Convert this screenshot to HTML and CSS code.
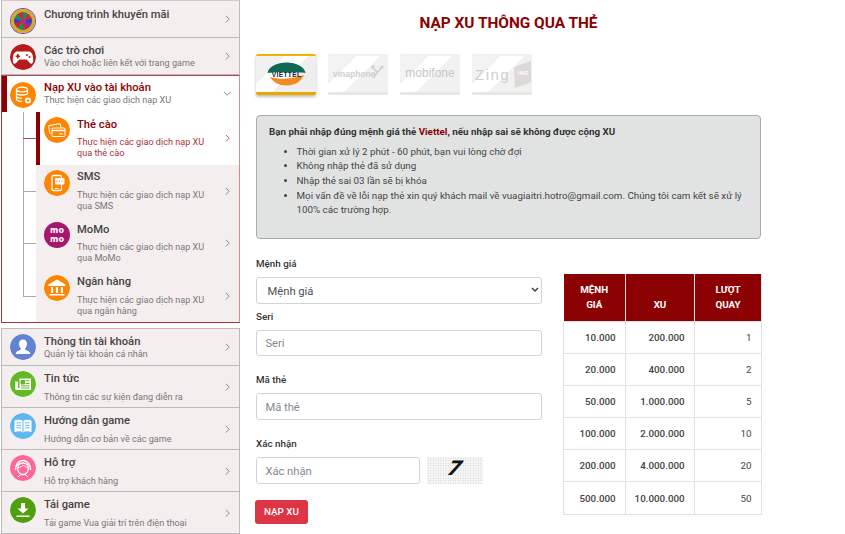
FILE: index.html
```html
<!DOCTYPE html>
<html lang="vi">
<head>
<meta charset="utf-8">
<title>Nạp XU thông qua thẻ</title>
<link rel="stylesheet" href="styles.css">
</head>
<body>
<div class="page">
  <aside class="sidebar">
    <div class="block">
      <a class="item first">
        <span class="ico wheel"></span>
        <span class="txt"><b class="t">Chương trình khuyến mãi</b></span>
        <svg class="chev" viewBox="0 0 6 10"><path d="M1 1l4 4-4 4"/></svg>
      </a>
      <a class="item">
        <svg class="ico" viewBox="0 0 26 26"><circle cx="13" cy="13" r="13" fill="#b71c1c"/><path d="M7.500 7.500h11c2.700 0 4 2.300 4.500 5.500.5 3.200.3 6.300-1.500 6.700-1.800.3-3.100-3-4.800-4.200H9.300c-1.700 1.200-3 4.500-4.800 4.200-1.800-.4-2-3.500-1.500-6.700.5-3.200 1.800-5.500 4.500-5.500z" fill="#fff"/><path d="M7 10h1.600v1.500H10V13H8.600v1.500H7V13H5.600v-1.500H7z" fill="#b71c1c"/><circle cx="17" cy="11" r="1" fill="#b71c1c"/><circle cx="19.500" cy="13" r="1" fill="#b71c1c"/></svg>
        <span class="txt"><b class="t">Các trò chơi</b><small class="s">Vào chơi hoặc liên kết với trang game</small></span>
        <svg class="chev" viewBox="0 0 6 10"><path d="M1 1l4 4-4 4"/></svg>
      </a>
      <div class="group">
        <a class="item head">
          <svg class="ico" viewBox="0 0 26 26"><circle cx="13" cy="13" r="13" fill="#ff8400"/><g fill="none" stroke="#fff" stroke-width="1.300"><ellipse cx="12" cy="7.500" rx="5.500" ry="2.300"/><path d="M6.500 7.500v9.500c0 1.300 2.500 2.300 5.500 2.300M17.500 7.500v5M6.500 10.700c0 1.300 2.500 2.300 5.500 2.300s5.500-1 5.500-2.300M6.500 13.900c0 1.300 2.500 2.300 5.500 2.300"/></g><circle cx="18" cy="18.500" r="3" fill="#fff"/><path d="M18 17v3M16.500 18.500h3" stroke="#ff8400"/></svg>
          <span class="txt"><b class="t">Nạp XU vào tài khoản</b><small class="s">Thực hiện các giao dịch nạp XU</small></span>
          <svg class="chev down" viewBox="0 0 10 6"><path d="M1 1l4 4 4-4"/></svg>
        </a>
        <div class="subs">
          <a class="sub on">
            <svg class="ico" viewBox="0 0 26 26"><circle cx="13" cy="13" r="13" fill="#ff8400"/><g fill="none" stroke="#fff" stroke-width="1"><rect x="5" y="7.500" width="12" height="8" rx="1" transform="rotate(-10 11 11)"/><rect x="8" y="11" width="13" height="8.500" rx="1" fill="#ff8400"/></g><path d="M8 13.500h13" stroke="#fff" stroke-width="1.500"/><path d="M15 17h4" stroke="#fff"/></svg>
            <span class="txt"><b class="t">Thẻ cào</b><small class="s">Thực hiện các giao dịch nạp XU<br>qua thẻ cào</small></span>
            <svg class="chev" viewBox="0 0 6 10"><path d="M1 1l4 4-4 4"/></svg>
          </a>
          <a class="sub">
            <svg class="ico" viewBox="0 0 26 26"><circle cx="13" cy="13" r="13" fill="#ff8400"/><rect x="8" y="5.500" width="9.500" height="15" rx="1.500" fill="none" stroke="#fff" stroke-width="1.300"/><rect x="11" y="8" width="9.500" height="6.500" rx="1" fill="#fff"/><path d="M12.500 11.200h1M15 11.200h1M17.500 11.200h1" stroke="#ff8400" stroke-width="1.200"/><path d="M11 18.500h3.500" stroke="#fff"/></svg>
            <span class="txt"><b class="t">SMS</b><small class="s">Thực hiện các giao dịch nạp XU<br>qua SMS</small></span>
            <svg class="chev" viewBox="0 0 6 10"><path d="M1 1l4 4-4 4"/></svg>
          </a>
          <a class="sub">
            <span class="ico momo"><span>mo</span><span>mo</span></span>
            <span class="txt"><b class="t">MoMo</b><small class="s">Thực hiện các giao dịch nạp XU<br>qua MoMo</small></span>
            <svg class="chev" viewBox="0 0 6 10"><path d="M1 1l4 4-4 4"/></svg>
          </a>
          <a class="sub">
            <svg class="ico" viewBox="0 0 26 26"><circle cx="13" cy="13" r="13" fill="#ff8400"/><path d="M13 4.500l8.500 5v1.500h-17V9.500z" fill="#fff"/><path d="M7 12h2.200v6H7zM11.900 12h2.200v6h-2.200zM16.800 12H19v6h-2.200zM5.500 19h15v1.500h-15z" fill="#fff"/></svg>
            <span class="txt"><b class="t">Ngân hàng</b><small class="s">Thực hiện các giao dịch nạp XU<br>qua ngân hàng</small></span>
            <svg class="chev" viewBox="0 0 6 10"><path d="M1 1l4 4-4 4"/></svg>
          </a>
        </div>
      </div>
    </div>
    <div class="block lower">
      <a class="item short">
        <svg class="ico" viewBox="0 0 26 26"><circle cx="13" cy="13" r="13" fill="#6482d2"/><path d="M13 5.500c2.600 0 4 2 4 4.500 0 1.800-.8 3.300-1.800 4.300v1.200c1.500 1.200 5 1.500 5 4.500H5.800c0-3 3.500-3.300 5-4.500v-1.200C9.800 13.300 9 11.800 9 10c0-2.500 1.400-4.500 4-4.500z" fill="#fff"/></svg>
        <span class="txt"><b class="t">Thông tin tài khoản</b><small class="s">Quản lý tài khoản cá nhân</small></span>
        <svg class="chev" viewBox="0 0 6 10"><path d="M1 1l4 4-4 4"/></svg>
      </a>
      <a class="item tall">
        <svg class="ico" viewBox="0 0 26 26"><circle cx="13" cy="13" r="13" fill="#5fba24"/><path d="M9.500 7.500h11.500v11.500H6.500a1.500 1.500 0 0 1-1.500-1.500v-7h3V17h1.500z" fill="#fff"/><path d="M11 9.500h3.500v3.500H11zM15.500 9.800h4M15.500 12.500h4M11 14.800h8.500M11 17h8.500" stroke="#5fba24" fill="#5fba24"/></svg>
        <span class="txt"><b class="t">Tin tức</b><small class="s">Thông tin các sự kiện đang diễn ra</small></span>
        <svg class="chev" viewBox="0 0 6 10"><path d="M1 1l4 4-4 4"/></svg>
      </a>
      <a class="item tall">
        <svg class="ico" viewBox="0 0 26 26"><circle cx="13" cy="13" r="13" fill="#5cb8f2"/><path d="M4.500 7.500c3-1 6.500-1 8.500.5 2-1.500 5.500-1.500 8.500-.5v11.500c-3-1-6.500-1-8.500.5-2-1.500-5.500-1.500-8.500-.5z" fill="#fff"/><path d="M13 8v11M6.500 10c1.500-.4 3-.4 4.500 0M6.500 12.500c1.500-.4 3-.4 4.500 0M6.500 15c1.500-.4 3-.4 4.500 0M15 10c1.500-.4 3-.4 4.500 0M15 12.500c1.500-.4 3-.4 4.500 0M15 15c1.500-.4 3-.4 4.500 0" stroke="#5cb8f2" fill="none"/></svg>
        <span class="txt"><b class="t">Hướng dẫn game</b><small class="s">Hướng dẫn cơ bản về các game</small></span>
        <svg class="chev" viewBox="0 0 6 10"><path d="M1 1l4 4-4 4"/></svg>
      </a>
      <a class="item tall">
        <svg class="ico" viewBox="0 0 26 26"><circle cx="13" cy="13" r="13" fill="#ff6797"/><path d="M5.500 15c0-5.500 3-9.500 7.500-9.500s7.500 4 7.500 9.500" fill="none" stroke="#fff" stroke-width="1.500"/><path d="M13 8c3.500 0 5.300 2.500 5.300 5.500 0 3.300-2.300 6-5.300 6s-5.300-2.700-5.300-6C7.700 10.500 9.500 8 13 8z" fill="#ff6797" stroke="#fff" stroke-width="1.300"/><path d="M8 12.500c2.500 0 4.500-1 5.500-2.500 1 1.500 2.500 2.500 4.500 2.500" fill="none" stroke="#fff"/><path d="M8 22c1.500-1.800 3-2.500 5-2.500s3.500.7 5 2.500" stroke="#fff" fill="none"/></svg>
        <span class="txt"><b class="t">Hỗ trợ</b><small class="s">Hỗ trợ khách hàng</small></span>
        <svg class="chev" viewBox="0 0 6 10"><path d="M1 1l4 4-4 4"/></svg>
      </a>
      <a class="item tall">
        <svg class="ico" viewBox="0 0 26 26"><circle cx="13" cy="13" r="13" fill="#4f9f0f"/><path d="M11 6h4v5.500h3.500L13 16.500 7.500 11.500H11z" fill="#fff"/><path d="M6.500 18.500h13v1.500h-13z" fill="#fff"/></svg>
        <span class="txt"><b class="t">Tải game</b><small class="s">Tải game Vua giải trí trên điện thoại</small></span>
        <svg class="chev" viewBox="0 0 6 10"><path d="M1 1l4 4-4 4"/></svg>
      </a>
    </div>
  </aside>

  <main class="main">
    <h1 class="title">NẠP XU THÔNG QUA THẺ</h1>

    <div class="cards">
      <div class="card active">
        <svg viewBox="0 0 60 36"><path d="M11.500 17c1-6 9-10.500 19-10.500S48.500 11 49.500 17c-6-1.500-32-1.500-38 0z" fill="#0c6b52"/><path d="M14 21c9 3 24 2 34-2-3 7-10 10.500-17.500 10.500C23.500 29.500 17 26 14 21z" fill="#f08a1c"/><text x="30.500" y="20.500" class="viettel">VIETTEL</text></svg>
      </div>
      <div class="card">
        <svg viewBox="0 0 60 36"><text x="5" y="21" class="logo vina">vinaphone</text><path d="M45 22l9-11M45 12l5 5" stroke="#c4c4c4" stroke-width="1.500" fill="none"/><circle cx="45" cy="11" r="1.800" fill="#c4c4c4"/><circle cx="54" cy="11" r="1.500" fill="#c4c4c4"/></svg>
      </div>
      <div class="card">
        <svg viewBox="0 0 60 36"><text x="30" y="21" class="logo mobi">mobifone</text></svg>
      </div>
      <div class="card">
        <svg viewBox="0 0 60 36"><text x="3" y="24" class="logo zing">Zing</text><path d="M42 11l17-6v21l-16 6z" fill="#d4d0d0"/><text x="51" y="19" class="logo ung">UNG</text></svg>
      </div>
    </div>

    <section class="notice">
      <p class="lead">Bạn phải nhập đúng mệnh giá thẻ <span class="red">Viettel</span>, nếu nhập sai sẽ không được cộng XU</p>
      <ul class="rules">
        <li>Thời gian xử lý 2 phút - 60 phút, bạn vui lòng chờ đợi</li>
        <li>Không nhập thẻ đã sử dụng</li>
        <li>Nhập thẻ sai 03 lần sẽ bị khóa</li>
        <li>Mọi vấn đề về lỗi nạp thẻ xin quý khách mail về vuagiaitri.hotro@gmail.com. Chúng tôi cam kết sẽ xử lý 100% các trường hợp.</li>
      </ul>
    </section>

    <div class="lower-row">
      <form class="form">
        <label class="lbl first-lbl">Mệnh giá</label>
        <div class="sel-wrap">
          <select class="ctl sel"><option>Mệnh giá</option></select>
          <svg class="sel-arrow" viewBox="0 0 8 5"><path d="M1 1l3 3 3-3"/></svg>
        </div>
        <label class="lbl seri-lbl">Seri</label>
        <input class="ctl" placeholder="Seri">
        <label class="lbl gap-lbl">Mã thẻ</label>
        <input class="ctl" placeholder="Mã thẻ">
        <label class="lbl gap-lbl">Xác nhận</label>
        <div class="cap-row">
          <input class="ctl cap-in" placeholder="Xác nhận">
          <div class="captcha"><span>7</span></div>
        </div>
        <button class="btn" type="button">NẠP XU</button>
      </form>

      <table class="rates">
        <thead>
          <tr><th class="c1">MỆNH GIÁ</th><th class="c2">XU</th><th class="c3">LƯỢT QUAY</th></tr>
        </thead>
        <tbody>
          <tr><td>10.000</td><td>200.000</td><td class="n">1</td></tr>
          <tr><td>20.000</td><td>400.000</td><td class="n">2</td></tr>
          <tr><td>50.000</td><td>1.000.000</td><td class="n">5</td></tr>
          <tr><td>100.000</td><td>2.000.000</td><td class="n">10</td></tr>
          <tr><td>200.000</td><td>4.000.000</td><td class="n">20</td></tr>
          <tr><td>500.000</td><td>10.000.000</td><td class="n">50</td></tr>
        </tbody>
      </table>
    </div>
  </main>
</div>
</body>
</html>
```
FILE: styles.css
```css
* { box-sizing: border-box; }
html, body { margin: 0; padding: 0; height: 534px; overflow: hidden; background: #fff; }
body { font-family: Roboto, "Liberation Sans", sans-serif; color: #333; }
.page { display: flex; align-items: flex-start; }

/* sidebar */
.sidebar { width: 239px; margin-left: 1px; flex: none; }
.block { display: flex; flex-direction: column; }
.lower { margin-top: 5px; border: 1px solid #bbb; }
.item { display: flex; align-items: flex-start; background: #f5eeef; border: 1px solid #bbb; border-top: 0; height: 37px; padding: 6px 0 0 8px; position: relative; }
.item.first { border-top: 1px solid #ccc; height: 38px; }
.ico { width: 26px; height: 26px; border-radius: 50%; flex: none; display: block; }
.txt { display: flex; flex-direction: column; margin: 0 0 0 8px; flex: 1; min-width: 0; }
.first .txt { margin-top: 1px; }
.t { font-size: 11.200px; line-height: 14px; font-weight: 500; color: #444; }
.s { font-size: 9.100px; line-height: 11px; color: #777; }
.chev { width: 5px; height: 8.500px; position: absolute; right: 9px; top: 14px; fill: none; stroke: #777; stroke-width: 1; }
.chev.down { width: 8.500px; height: 5px; right: 8px; top: 15px; }

.wheel { width: 24px; height: 24px; margin: 2px 1px 0; border: 3px solid #d4aa2a; box-shadow: 0 0 0 1px #7a4ca0; background: radial-gradient(circle, #a8327e 0 2.500px, transparent 3px), conic-gradient(#1f8a5a 0 36deg, #c8283c 36deg 72deg, #3440b4 72deg 108deg, #7a35b0 108deg 144deg, #c8283c 144deg 180deg, #1f8a5a 180deg 216deg, #c8283c 216deg 252deg, #3440b4 252deg 288deg, #1f8a5a 288deg 324deg, #c8283c 324deg 360deg); }

.group { border: 1px solid #a83239; border-top-color: #b2484e; border-right-color: #d08f8f; height: 248px; background: #fff; display: flex; flex-direction: column; }
.item.head { background: #fff; border: 0; border-left: 5px solid #8b0000; height: 36px; padding: 5.500px 0 0 3px; }
.head .txt { margin-top: -1px; }
.head .t { color: #8b0000; }
.subs { padding-left: 34px; position: relative; display: flex; flex-direction: column; }
.subs::before { content: ""; position: absolute; left: 21px; top: 0; height: 184px; border-left: 1px solid #aaa; }
.sub { display: flex; align-items: flex-start; height: 52.500px; padding: 5px 0 0 8px; background: #f5eeef; position: relative; }
.sub::before { content: ""; position: absolute; left: -13px; top: 26px; width: 13px; border-top: 1px solid #aaa; }
.sub .txt { margin: .5px 0 0 7px; }
.sub .s { margin-top: 5.500px; line-height: 11px; }
.sub .chev { top: 22px; }
.sub.on { background: #fff; border-left: 4px solid #8b0000; padding-left: 4px; }
.sub.on::before { border-top-color: #b2484e; left: -17px; }
.sub.on .t { color: #8b0000; }
.sub.on .s { color: #a83239; }
.sub.on .chev { stroke: #a83239; }

.momo { background: #a5176c; color: #fff; font-family: "DejaVu Sans", sans-serif; font-weight: 700; font-size: 8px; line-height: 9px; display: flex; flex-direction: column; align-items: center; justify-content: center; padding-bottom: 1px; }

.lower .item { border-left: 0; border-right: 0; height: 42px; padding: 5px 0 0 8px; }
.lower .item:last-child { border-bottom: 0; height: 41px; }
.lower .item.short { height: 37px; }
.lower .txt { margin-top: 1px; }
.lower .tall .s { margin-top: 5.500px; }
.lower .chev { top: 14px; }
.lower .tall .chev { top: 16.500px; }

/* main */
.main { width: 505px; margin-left: 16px; flex: none; }
.title { margin: 15px 0 0; font-size: 15.400px; line-height: 16px; font-weight: 700; color: #8b0000; text-align: center; }
.cards { display: flex; gap: 12px; margin-top: 23px; }
.card { width: 60px; height: 41px; background: linear-gradient(135deg, #f1f1f1 0 30%, #fff 30% 55%, #eee 55% 100%); border-top: 2px solid #eeeee8; border-bottom: 3px solid #e2e2da; border-radius: 2px; opacity: .8; }
.card svg { display: block; width: 60px; height: 36px; }
.card.active { opacity: 1; border-top-color: #f2b200; border-bottom-color: #e8a800; box-shadow: 0 2px 3px rgba(0,0,0,.25); }
.viettel { font: 700 6.500px "Liberation Sans", sans-serif; fill: #123; text-anchor: middle; letter-spacing: .4px; }
.logo { font-family: "Liberation Sans", sans-serif; fill: #c4c4c4; }
.vina { font-size: 8.500px; font-weight: 700; }
.mobi { font-size: 12px; text-anchor: middle; fill: #b8b8b8; }
.zing { font-size: 15px; letter-spacing: 1.500px; }
.ung { font-size: 5px; text-anchor: middle; fill: #fff; font-weight: 700; }

.notice { margin-top: 20px; height: 124px; background: #e1e3e3; border: 1px solid #aaa; border-radius: 4px; padding: 8.600px 12px; font-size: 9.800px; line-height: 14.700px; color: #444; }
.lead { margin: 0 0 5.300px; font-weight: 700; color: #333; }
.red { color: #8b0000; }
.rules { margin: 0; padding: 0 0 0 27.500px; }

.lower-row { display: flex; justify-content: space-between; align-items: flex-start; margin-top: 18px; }
.form { width: 286px; display: flex; flex-direction: column; }
.lbl { font-size: 9.800px; line-height: 14px; font-weight: 500; color: #333; }
.first-lbl { margin-bottom: 6.300px; }
.seri-lbl { margin: 5.700px 0 6px; }
.gap-lbl { margin: 16.800px 0 6.300px; }
.ctl { height: 26.600px; width: 100%; border: 1px solid #ced4da; border-radius: 3px; padding: 1.500px 8.400px 0; font: 400 11.200px Roboto, sans-serif; color: #495057; background: #fff; }
.ctl::placeholder { color: #6c757d; opacity: .85; }
.sel-wrap { position: relative; height: 26.600px; }
.sel { display: block; appearance: none; -webkit-appearance: none; padding-left: 10.500px; }
.sel-arrow { position: absolute; right: 3px; top: 10px; width: 8px; height: 5px; fill: none; stroke: #343a40; stroke-width: 1.400; pointer-events: none; }
.cap-row { display: flex; align-items: flex-start; gap: 7px; }
.cap-in { width: 164px; }
.captcha { width: 56px; height: 26.600px; background-color: #f5f5f5; background-image: radial-gradient(#c4c4c4 .6px, transparent .7px); background-size: 2.500px 2.500px; display: flex; justify-content: center; align-items: flex-start; }
.captcha span { font: italic 700 20px "DejaVu Sans", sans-serif; color: #111; line-height: 22px; transform: skewX(-14deg); }
.btn { margin: 16.400px 0 0 -1px; width: 53px; height: 23.700px; border: 0; padding: 0; border-radius: 3px; background: #dc3545; color: #fff; font: 500 9.800px Roboto, sans-serif; align-self: flex-start; }

.rates { border-collapse: collapse; table-layout: fixed; width: 198px; font-size: 9.800px; color: #444; margin: 17px -1px 0 0; }
.rates th { background: #8b0000; color: #fff; font-weight: 700; line-height: 14.700px; height: 47px; vertical-align: bottom; padding: 0 8px 8px; border: 1px solid #dee2e6; border-top: 0; border-left: 0; text-align: center; }
.c1 { width: 62px; }
.c2 { width: 69px; }
.c3 { width: 67px; }
.rates td { height: 32.200px; text-align: right; padding: 0 9.400px 0 8px; font-weight: 500; border: 1px solid #dee2e6; }
.rates td.n { font-weight: 400; }
```
